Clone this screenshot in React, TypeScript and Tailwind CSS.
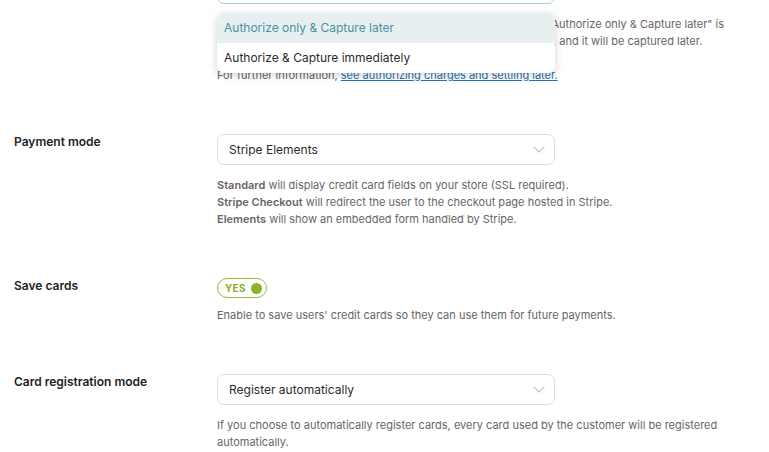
import React from 'react';

const Chevron: React.FC = () => (
  <svg width="12" height="7" viewBox="0 0 12 7" fill="none" className="shrink-0">
    <path d="M1 1l5 5 5-5" stroke="#c8c8c8" strokeWidth="1.2" strokeLinecap="round" strokeLinejoin="round" />
  </svg>
);

const Select: React.FC<{ value: string; focused?: boolean }> = ({ value, focused }) => (
  <div
    className={`w-[338px] h-[31px] rounded-[7px] border bg-white flex items-center justify-between pl-[11px] pr-[9px] text-[12px] text-[#2b2b2b] ${
      focused ? 'border-[#9fd6e8]' : 'border-[#dcdcdc]'
    }`}
  >
    <span>{value}</span>
    <Chevron />
  </div>
);

const Row: React.FC<{ label: string; children: React.ReactNode; className?: string }> = ({ label, children, className }) => (
  <div className={`flex ${className ?? ''}`}>
    <div className="w-[217px] shrink-0 pl-[14px] text-[12px] font-semibold text-[#1d1d1f] leading-[17px] -mt-[1px]">{label}</div>
    <div className="flex-1">{children}</div>
  </div>
);

const App: React.FC = () => {
  return (
    <div
      className="bg-white w-[769px] h-[452px] overflow-hidden text-[#6a6466]"
      style={{ fontFamily: 'Inter, "Noto Sans", sans-serif' }}
    >
      {/* Capture section, select is open */}
      <Row label="" className="-mt-[27px]">
        <div className="relative">
          <Select value="Authorize only & Capture later" focused />
          <div className="mt-[12px] text-[11px] leading-[17px] whitespace-nowrap">
            <div>Choose when payments is captured on your store. If the option "Authorize only &amp; Capture later" is</div>
            <div>selected, your payments will only be authorized at the check-out, and it will be captured later.</div>
            <div>Capture it from the order page.</div>
            <div>
              For further information,{' '}
              <a href="#" className="text-[#2271b1] underline">see authorizing charges and settling later.</a>
            </div>
          </div>
          <div className="absolute left-0 top-[40px] w-[338px] rounded-[7px] bg-white shadow-[0_2px_8px_rgba(0,0,0,0.18)] overflow-hidden text-[12px]">
            <div className="h-[30px] flex items-center pl-[7px] bg-[#e8eff1] text-[#4a8fa6]">Authorize only &amp; Capture later</div>
            <div className="h-[30px] flex items-center pl-[7px] text-[#2b2b2b]">Authorize &amp; Capture immediately</div>
          </div>
        </div>
      </Row>

      <Row label="Payment mode" className="mt-[50px]">
        <Select value="Stripe Elements" />
        <div className="mt-[12px] text-[11px] leading-[17px]">
          <div><span className="font-semibold">Standard</span> will display credit card fields on your store (SSL required).</div>
          <div><span className="font-semibold">Stripe Checkout</span> will redirect the user to the checkout page hosted in Stripe.</div>
          <div><span className="font-semibold">Elements</span> will show an embedded form handled by Stripe.</div>
        </div>
      </Row>

      <Row label="Save cards" className="mt-[50px]">
        <div className="w-[50px] h-[20px] rounded-full border-[1.5px] border-[#9bbb3c] flex items-center justify-between pl-[7px] pr-[4px]">
          <span className="text-[10px] font-bold text-[#8aab2c] tracking-[0.3px]">YES</span>
          <span className="w-[11px] h-[11px] rounded-full bg-[#8cb22c]" />
        </div>
        <div className="mt-[9px] text-[11px] leading-[17px]">
          Enable to save users' credit cards so they can use them for future payments.
        </div>
      </Row>

      <Row label="Card registration mode" className="mt-[50px]">
        <Select value="Register automatically" />
        <div className="mt-[12px] text-[11px] leading-[17px] w-[512px]">
          If you choose to automatically register cards, every card used by the customer will be registered automatically.
        </div>
      </Row>
    </div>
  );
};

export default App;
